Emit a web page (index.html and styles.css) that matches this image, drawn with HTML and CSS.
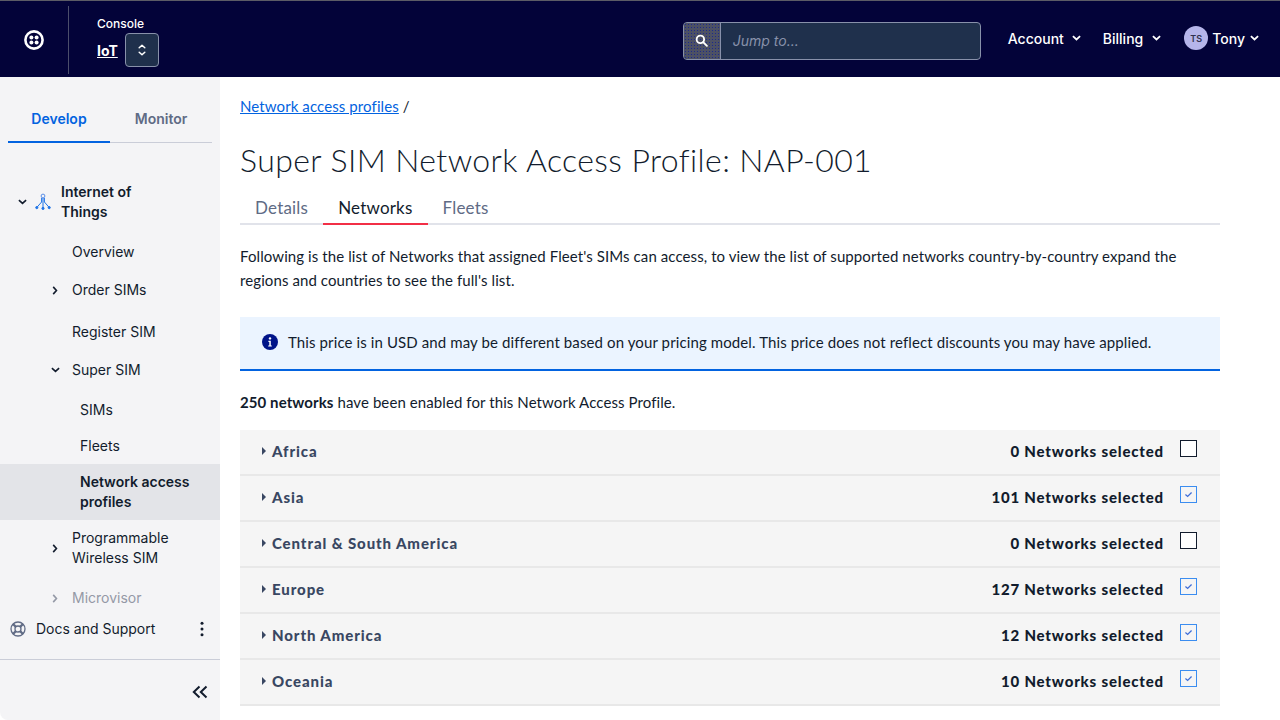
FILE: index.html
```html
<!DOCTYPE html>
<html lang="en">
<head>
    <meta charset="UTF-8">
    <title>Super SIM Network Access Profile</title>
    <link rel="stylesheet" href="styles.css">
</head>
<body>
    <header class="topbar">
        <div class="logo-cell">
            <svg class="logo" viewBox="0 0 20 20" width="20" height="20">
                <circle cx="10" cy="10" r="8.6" fill="none" stroke="#fff" stroke-width="2.6"/>
                <circle cx="7.4" cy="7.4" r="2" fill="#fff"/>
                <circle cx="12.6" cy="7.4" r="2" fill="#fff"/>
                <circle cx="7.4" cy="12.6" r="2" fill="#fff"/>
                <circle cx="12.6" cy="12.6" r="2" fill="#fff"/>
            </svg>
        </div>
        <div class="product">
            <div class="product-label">Console</div>
            <div class="product-row">
                <a class="product-name" href="#">IoT</a>
                <button class="switcher">
                    <svg viewBox="0 0 10 14" width="10" height="14" fill="none" stroke="#fff" stroke-width="1.5" stroke-linecap="round" stroke-linejoin="round"><path d="M2.2 4.8 5 2.2l2.8 2.6"/><path d="M2.2 9.2 5 11.8l2.8-2.6"/></svg>
                </button>
            </div>
        </div>
        <div class="search">
            <span class="search-btn">
                <svg viewBox="0 0 14 14" width="13" height="13" fill="none" stroke="#fff" stroke-width="2"><circle cx="5.8" cy="5.8" r="4"/><path d="m8.8 8.8 4 4" stroke-linecap="round"/></svg>
            </span>
            <span class="search-input">Jump to...</span>
        </div>
        <nav class="topnav">
            <span class="topnav-item account">Account <svg class="chev" viewBox="0 0 10 6" width="9" height="6"><path d="m1 1 4 3.6L9 1"/></svg></span>
            <span class="topnav-item billing">Billing <svg class="chev" viewBox="0 0 10 6" width="9" height="6"><path d="m1 1 4 3.6L9 1"/></svg></span>
            <span class="topnav-item user"><span class="avatar">TS</span>Tony <svg class="chev" viewBox="0 0 10 6" width="9" height="6"><path d="m1 1 4 3.6L9 1"/></svg></span>
        </nav>
    </header>

    <div class="main">
        <aside class="sidebar">
            <div class="side-tabs">
                <span class="side-tab active">Develop</span>
                <span class="side-tab">Monitor</span>
            </div>
            <div class="side-scroll">
                <div class="side-group">
                    <svg class="arrow" viewBox="0 0 10 6" width="9" height="6"><path d="m1 1 4 3.6L9 1"/></svg>
                    <svg class="iot-icon" viewBox="0 0 16 18" width="16" height="18" fill="none" stroke="#1f74e8" stroke-width="1">
                        <circle cx="8" cy="3" r="1.9" stroke="#5b8fe8"/>
                        <path d="M8 5v10M6.6 5v4L2.2 14M9.400 5v4l4.400 5"/>
                        <circle cx="8" cy="15.4" r="1.1" fill="#1f74e8"/>
                        <circle cx="1.800" cy="14.6" r="1.1" fill="#1f74e8"/>
                        <circle cx="14.2" cy="14.6" r="1.1" fill="#1f74e8"/>
                    </svg>
                    <span>Internet of<br>Things</span>
                </div>
                <div class="side-item overview">Overview</div>
                <div class="side-item order"><svg class="arrow-r" viewBox="0 0 6 10" width="6" height="9"><path d="m1 1 3.6 4L1 9"/></svg>Order SIMs</div>
                <div class="side-item register">Register SIM</div>
                <div class="side-item super"><svg class="arrow" viewBox="0 0 10 6" width="9" height="6"><path d="m1 1 4 3.6L9 1"/></svg>Super SIM</div>
                <div class="side-sub sims">SIMs</div>
                <div class="side-sub fleets">Fleets</div>
                <div class="side-sub current">Network access<br>profiles</div>
                <div class="side-item wireless"><svg class="arrow-r" viewBox="0 0 6 10" width="6" height="9"><path d="m1 1 3.6 4L1 9"/></svg><span>Programmable<br>Wireless SIM</span></div>
                <div class="side-item micro"><svg class="arrow-r" viewBox="0 0 6 10" width="6" height="9"><path d="m1 1 3.6 4L1 9"/></svg>Microvisor</div>
            </div>
            <div class="side-docs">
                <svg viewBox="0 0 16 16" width="16" height="16" fill="none" stroke="#606b85" stroke-width="1.3">
                    <circle cx="8" cy="8" r="7"/>
                    <circle cx="8" cy="8" r="3"/>
                    <path d="M3 3l2.9 2.9M13 3l-2.9 2.9M3 13l2.9-2.9M13 13l-2.9-2.9" stroke-width="2.2"/>
                </svg>
                <span class="docs-label">Docs and Support</span>
                <svg viewBox="0 0 4 16" width="4" height="16" fill="#121c2d"><circle cx="2" cy="2.2" r="1.5"/><circle cx="2" cy="8" r="1.5"/><circle cx="2" cy="13.8" r="1.5"/></svg>
            </div>
            <div class="side-collapse">
                <svg viewBox="0 0 16 14" width="16" height="14" fill="none" stroke="#121c2d" stroke-width="2"><path d="M7.500 1.500 1.800 7l5.700 5.500M14.500 1.500 8.800 7l5.700 5.500"/></svg>
            </div>
        </aside>

        <main class="content">
            <div class="crumbs"><a href="#">Network access profiles</a> /</div>
            <h1 class="title">Super SIM Network Access Profile: NAP-001</h1>
            <div class="tabs">
                <span class="tab">Details</span>
                <span class="tab active">Networks</span>
                <span class="tab">Fleets</span>
            </div>
            <p class="intro">Following is the list of Networks that assigned Fleet's SIMs can access, to view the list of supported networks country-by-country expand the regions and countries to see the full's list.</p>
            <div class="notice">
                <svg viewBox="0 0 16 16" width="16" height="16"><circle cx="8" cy="8" r="8" fill="#001489"/><circle cx="8" cy="4.400" r="1.200" fill="#fff"/><path d="M6.400 6.800h2.400v4.600h1v1.200H6.200v-1.200h1.100V8H6.400z" fill="#fff"/></svg>
                <span>This price is in USD and may be different based on your pricing model. This price does not reflect discounts you may have applied.</span>
            </div>
            <p class="summary"><b>250 networks</b> have been enabled for this Network Access Profile.</p>
            <div class="regions">
                <div class="region"><span class="caret"></span><span class="region-name">Africa</span><span class="region-count">0 Networks selected</span><span class="check"></span></div>
                <div class="region"><span class="caret"></span><span class="region-name">Asia</span><span class="region-count">101 Networks selected</span><span class="check on"><svg viewBox="0 0 10 8" width="9" height="7" fill="none" stroke="#3f6fd8" stroke-width="1.500"><path d="m1.500 4 2.500 2.200 4.500-4.500"/></svg></span></div>
                <div class="region"><span class="caret"></span><span class="region-name">Central &amp; South America</span><span class="region-count">0 Networks selected</span><span class="check"></span></div>
                <div class="region"><span class="caret"></span><span class="region-name">Europe</span><span class="region-count">127 Networks selected</span><span class="check on"><svg viewBox="0 0 10 8" width="9" height="7" fill="none" stroke="#3f6fd8" stroke-width="1.500"><path d="m1.500 4 2.500 2.200 4.500-4.500"/></svg></span></div>
                <div class="region"><span class="caret"></span><span class="region-name">North America</span><span class="region-count">12 Networks selected</span><span class="check on"><svg viewBox="0 0 10 8" width="9" height="7" fill="none" stroke="#3f6fd8" stroke-width="1.500"><path d="m1.500 4 2.500 2.200 4.500-4.500"/></svg></span></div>
                <div class="region"><span class="caret"></span><span class="region-name">Oceania</span><span class="region-count">10 Networks selected</span><span class="check on"><svg viewBox="0 0 10 8" width="9" height="7" fill="none" stroke="#3f6fd8" stroke-width="1.500"><path d="m1.500 4 2.500 2.200 4.500-4.500"/></svg></span></div>
            </div>
        </main>
    </div>
</body>
</html>
```

FILE: styles.css
```css
* {
    box-sizing: border-box;
}
html, body {
    margin: 0;
    height: 720px;
    overflow: hidden;
}
body {
    font-family: 'Inter', sans-serif;
    background-color: #fff;
    color: #121c2d;
}

/* top bar */
.topbar {
    display: flex;
    align-items: center;
    height: 77px;
    background-color: #030339;
    border-top: 1px solid #5c5c66;
    color: #fff;
}
.logo-cell {
    display: flex;
    align-items: center;
    justify-content: center;
    width: 69px;
    height: 68px;
    margin-top: 1px;
    border-right: 1px solid #4b4e6b;
}
.product {
    margin-left: 28px;
    margin-top: 5px;
}
.product-label {
    font-size: 12px;
    font-weight: 500;
    line-height: 16px;
}
.product-row {
    display: flex;
    align-items: center;
    gap: 7px;
    margin-top: 1px;
}
.product-name {
    color: #fff;
    font-size: 14px;
    font-weight: 700;
    text-decoration: underline;
}
.switcher {
    display: flex;
    align-items: center;
    justify-content: center;
    width: 34px;
    height: 34px;
    padding: 0;
    background-color: #1f304c;
    border: 1px solid #8891aa;
    border-radius: 4px;
}
.search {
    display: flex;
    width: 298px;
    height: 38px;
    margin-left: 524px;
    margin-top: 3px;
    background-color: #1f304c;
    border: 1px solid #8891aa;
    border-radius: 4px;
    overflow: hidden;
}
.search-btn {
    display: flex;
    align-items: center;
    justify-content: center;
    flex: 0 0 37px;
    background-color: #4d5164;
    background-image: radial-gradient(#1c2a8c 0.6px, transparent 0.8px);
    background-size: 3px 3px;
    border-right: 1px solid #8891aa;
}
.search-input {
    padding-left: 12px;
    font-size: 14px;
    font-style: italic;
    line-height: 36px;
    color: #8891aa;
}
.topnav {
    display: flex;
    align-items: center;
    margin-top: -2px;
    font-size: 14px;
    font-weight: 500;
}
.topnav-item {
    display: flex;
    align-items: center;
}
.chev {
    fill: none;
    stroke: #fff;
    stroke-width: 2;
    margin-left: 8px;
}
.account {
    margin-left: 27px;
}
.billing {
    margin-left: 22px;
}
.billing .chev {
    margin-left: 9px;
}
.user {
    margin-left: 23px;
}
.avatar {
    display: flex;
    align-items: center;
    justify-content: center;
    width: 24px;
    height: 24px;
    margin-right: 4px;
    background-color: #b5b5ea;
    border-radius: 50%;
    color: #30304f;
    font-size: 9px;
    font-weight: 600;
}
.user .chev {
    margin-left: 5px;
}

/* layout */
.main {
    display: flex;
    height: 643px;
}
.sidebar {
    display: flex;
    flex-direction: column;
    flex: 0 0 220px;
    background-color: #f4f4f6;
    border-bottom-left-radius: 8px;
}
.side-tabs {
    display: flex;
    height: 66px;
    margin: 0 8px;
    border-bottom: 1px solid #cacdd8;
}
.side-tab {
    flex: 0 0 102px;
    padding-top: 33px;
    text-align: center;
    font-size: 14px;
    font-weight: 600;
    color: #606b85;
    line-height: 18px;
}
.side-tab.active {
    color: #0263e0;
    border-bottom: 2px solid #0263e0;
    margin-bottom: -1px;
}
.side-scroll {
    flex: 1;
    overflow: hidden;
    padding-top: 39px;
    font-size: 14px;
    line-height: 20px;
}
.side-group {
    display: flex;
    align-items: center;
    padding-left: 18px;
    font-weight: 600;
    color: #121c2d;
}
.side-group .iot-icon {
    margin-left: 8px;
    margin-right: 10px;
}
.arrow, .arrow-r {
    fill: none;
    stroke: #121c2d;
    stroke-width: 1.8;
    flex: none;
}
.side-item {
    display: flex;
    align-items: center;
    padding-left: 72px;
    position: relative;
}
.side-item svg {
    position: absolute;
    left: 51px;
}
.side-item .arrow-r {
    left: 52px;
}
.side-sub {
    padding-left: 80px;
}
.overview { margin-top: 20px; }
.order { margin-top: 18px; }
.register { margin-top: 22px; }
.super { margin-top: 18px; }
.sims { margin-top: 20px; }
.fleets { margin-top: 16px; }
.current {
    margin-top: 8px;
    padding-top: 8px;
    padding-bottom: 8px;
    background-color: #e3e4e8;
    font-weight: 600;
}
.wireless { margin-top: 8px; }
.micro {
    margin-top: 20px;
    color: #9499a6;
}
.micro .arrow-r {
    stroke: #9499a6;
}
.side-docs {
    display: flex;
    align-items: center;
    height: 50px;
    padding-left: 10px;
    border-bottom: 1px solid #cacdd8;
    font-size: 14px;
    margin-top: -17px;
    padding-bottom: 12px;
    padding-right: 16px;
    background-color: #f4f4f6;
    position: relative;
}
.docs-label {
    flex: 1;
    margin-left: 10px;
}
.side-collapse {
    display: flex;
    justify-content: flex-end;
    padding: 25px 12px 0 0;
    height: 60px;
}

/* content */
.content {
    flex: 0 0 980px;
    margin-left: 20px;
    font-family: 'Lato', sans-serif;
    font-size: 14px;
    color: #121c2d;
}
.crumbs {
    margin-top: 20px;
    font-size: 15px;
    line-height: 18px;
    letter-spacing: 0.1px;
}
.crumbs a {
    color: #0263e0;
}
.title {
    margin: 25px 0 0;
    font-size: 32px;
    font-weight: 300;
    line-height: 40px;
    letter-spacing: 0.4px;
}
.tabs {
    display: flex;
    height: 40px;
    margin-top: 5px;
    border-bottom: 2px solid #e1e3ea;
}
.tab {
    padding: 12px 15px 0;
    font-size: 17px;
    line-height: 22px;
    letter-spacing: 0.2px;
    color: #606b85;
}
.tab.active {
    color: #121c2d;
    border-bottom: 2px solid #f22f46;
    margin-bottom: -2px;
}
.intro {
    margin: 19px 0 0;
    font-size: 15px;
    line-height: 24px;
    letter-spacing: 0.09px;
}
.notice {
    display: flex;
    align-items: center;
    gap: 10px;
    height: 54px;
    margin-top: 25px;
    padding: 0 22px 2px;
    background-color: #ebf4ff;
    border-bottom: 2px solid #0263e0;
    font-size: 15px;
    letter-spacing: 0.11px;
}
.summary {
    margin: 21px 0 0;
    font-size: 15px;
    line-height: 20px;
    letter-spacing: 0.09px;
}
.regions {
    margin-top: 18px;
}
.region {
    display: flex;
    align-items: center;
    height: 46px;
    padding: 0 23px 3px 22px;
    background-color: #f5f5f5;
    border-bottom: 2px solid #e8e8e8;
}
.caret {
    width: 0;
    height: 0;
    border-left: 4px solid #394762;
    border-top: 4px solid transparent;
    border-bottom: 4px solid transparent;
    margin-right: 6px;
}
.region-name {
    flex: 1;
    font-size: 15px;
    font-weight: 900;
    color: #394762;
    letter-spacing: 0.9px;
}
.region-count {
    font-size: 15px;
    font-weight: 900;
    letter-spacing: 0.82px;
}
.check {
    display: flex;
    align-items: center;
    justify-content: center;
    align-self: flex-start;
    width: 17px;
    height: 17px;
    margin-left: 16px;
    margin-top: 10px;
    background-color: #fff;
    border: 1px solid #121c2d;
}
.check.on {
    border-color: #3b8df0;
    background-color: #f5f5f5;
}
```
